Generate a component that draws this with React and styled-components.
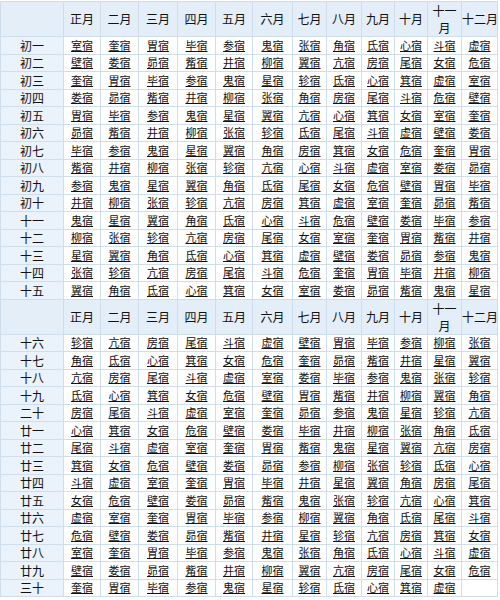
import React from 'react'
import { styled, createGlobalStyle, css } from 'styled-components'

const GlobalStyle = createGlobalStyle`
    html, body {
        margin: 0;
        padding: 0;
        background: #FFFFFF;
    }
    body {
        font-family: "Noto Sans CJK SC", "Noto Sans", sans-serif;
    }
`

// 二十七宿（表中不含牛宿）
const MANSIONS = ['角', '亢', '氐', '房', '心', '尾', '箕', '斗', '女', '虚', '危', '室', '壁', '奎', '娄', '胃', '昴', '毕', '觜', '参', '井', '鬼', '柳', '星', '张', '翼', '轸']
const MONTHS = ['正月', '二月', '三月', '四月', '五月', '六月', '七月', '八月', '九月', '十月', '十一月', '十二月']
const MONTH_START = [11, 13, 15, 17, 19, 21, 24, 0, 2, 4, 7, 9]
const DAYS = [
    '初一', '初二', '初三', '初四', '初五', '初六', '初七', '初八', '初九', '初十',
    '十一', '十二', '十三', '十四', '十五', '十六', '十七', '十八', '十九', '二十',
    '廿一', '廿二', '廿三', '廿四', '廿五', '廿六', '廿七', '廿八', '廿九', '三十',
]
const COL_WIDTHS = [63, 37, 38, 39, 38, 37, 40, 34, 35, 33, 33, 34, 36]

function mansionFor(month, day) {
    if (month === 11 && day === 29) return null
    return MANSIONS[(MONTH_START[month] + day) % 27] + '宿'
}

function HeaderRow() {
    return (
        <StHeadRow>
            <StCorner />
            {MONTHS.map((m) => (
                <StHeadCell key={m}>
                    <StHeadLabel $wrap={m === '十一月'}>{m}</StHeadLabel>
                </StHeadCell>
            ))}
        </StHeadRow>
    )
}

function Section({ from }) {
    return (
        <tbody>
            <HeaderRow />
            {DAYS.slice(from, from + 15).map((day, i) => (
                <StRow key={day}>
                    <StDayCell>{day}</StDayCell>
                    {MONTHS.map((m, mi) => {
                        const name = mansionFor(mi, from + i)
                        return (
                            <StCell key={m}>
                                {name && <StLink href="#">{name}</StLink>}
                            </StCell>
                        )
                    })}
                </StRow>
            ))}
        </tbody>
    )
}

export default function App() {
    return (
        <>
            <GlobalStyle />
            <StTable>
                <colgroup>
                    {COL_WIDTHS.map((w, i) => (
                        <col key={i} style={{ width: w }} />
                    ))}
                </colgroup>
                <Section from={0} />
                <Section from={15} />
            </StTable>
        </>
    )
}

const StTable = styled.table`
    width: 497px;
    table-layout: fixed;
    border-collapse: collapse;
    margin: 1px 0 0 0;
`

const cellBase = css`
    border: 1px solid #CFDEEC;
    text-align: center;
    vertical-align: middle;
    padding: 0;
`

const StHeadRow = styled.tr`
    height: 35px;
`

const StCorner = styled.td`
    ${cellBase}
    background: #E4EEF9;
`

const StHeadCell = styled.th`
    ${cellBase}
    background: #E4EEF9;
    font-size: 12px;
    font-weight: normal;
    color: #111;
    line-height: 16px;
`

const StHeadLabel = styled.span`
    display: inline-block;
    white-space: nowrap;
    ${({ $wrap }) =>
        $wrap &&
        css`
            white-space: normal;
            width: 2em;
            line-height: 17px;
        `}
`

const StRow = styled.tr`
    height: 17.5px;
`

const StDayCell = styled.td`
    ${cellBase}
    background: #EAF2FB;
    font-size: 12px;
    color: #111;
    line-height: 13px;
`

const StCell = styled.td`
    ${cellBase}
    background: #FFFFFF;
    font-size: 11px;
    line-height: 13px;
`

const StLink = styled.a`
    color: #111;
    text-decoration: underline;
`
